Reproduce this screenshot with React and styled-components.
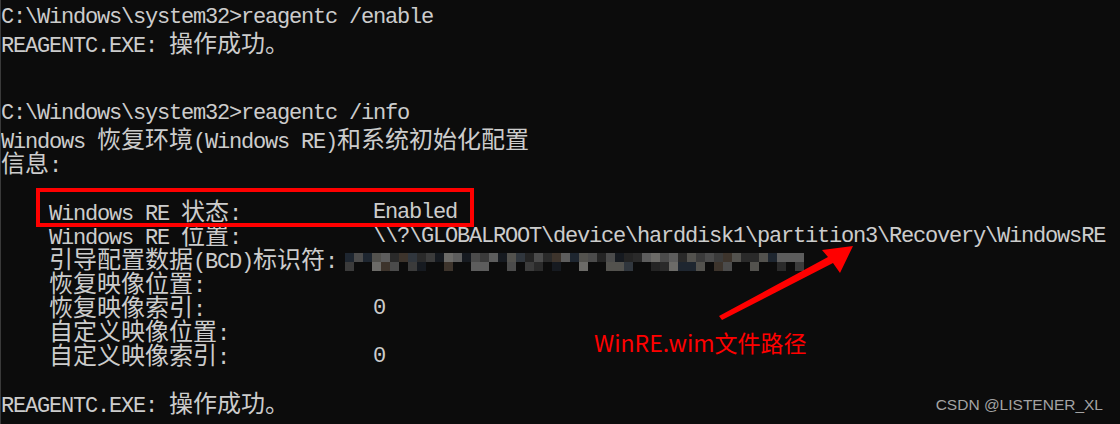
import React from "react";
import styled, { createGlobalStyle } from "styled-components";

const GlobalStyle = createGlobalStyle`
  html, body {
    margin: 0;
    padding: 0;
    background: #0c0c0c;
  }
`;

const Screen = styled.div`
  position: relative;
  width: 1120px;
  height: 424px;
  overflow: hidden;
  background: #0c0c0c;
  border-left: 1px solid #3a3a3a;
  box-sizing: border-box;
`;

const Console = styled.div`
  padding-top: 6px;
  color: #cccccc;
  font-family: "Liberation Mono", "DejaVu Sans Mono", monospace;
  font-size: 22px;
  letter-spacing: -1.2px;
`;

const Line = styled.div`
  height: 24px;
  line-height: 24px;
  white-space: pre;
`;

const Han = styled.span`
  display: inline-block;
  height: 24px;
  font-family: "Noto Sans CJK SC", sans-serif;
  font-size: 24px;
  letter-spacing: 0;
  line-height: 24px;
`;

const InfoRow = styled.div`
  display: grid;
  grid-template-columns: 324px auto;
  height: 24px;
  line-height: 24px;
  padding-left: 48px;
  white-space: pre;
`;

const Value = styled.div`
  display: flex;
  align-items: center;
  margin-left: ${(p) => (p.$shift ? "-28px" : "0")};
`;

const Highlight = styled.div`
  position: absolute;
  left: 35px;
  top: 188px;
  width: 438px;
  height: 39px;
  border: 4px solid #ff0000;
  box-sizing: border-box;
`;

const Overlay = styled.svg`
  position: absolute;
  left: 0;
  top: 0;
  pointer-events: none;
`;

const Caption = styled.div`
  position: absolute;
  left: 593px;
  top: 327px;
  color: #ff0000;
  font-family: "Noto Sans CJK SC", "Liberation Sans", sans-serif;
  font-size: 23px;
  line-height: 30px;
  white-space: nowrap;
`;

const Watermark = styled.div`
  position: absolute;
  right: 17px;
  bottom: 10px;
  color: #a3a3a3;
  font-family: "Liberation Sans", Arial, sans-serif;
  font-size: 15.5px;
  line-height: 18px;
  white-space: nowrap;
`;

const isWide = (ch) => ch.charCodeAt(0) >= 0x2e80;

// splits a console line into half-width runs and full-width (CJK) runs
const Term = ({ text }) => {
  const parts = [];
  let run = "";
  let wide = false;
  const flush = () => {
    if (!run) return;
    parts.push(wide ? <Han key={parts.length}>{run}</Han> : run);
    run = "";
  };
  for (const ch of text) {
    if (isWide(ch) !== wide) {
      flush();
      wide = isWide(ch);
    }
    run += ch;
  }
  flush();
  return <>{parts}</>;
};

const palette = [
  "#2a2a2a", "#3b3b3b", "#4b4b4b", "#5d5d5d", "#6c6b68",
  "#1e2630", "#30363d", "#3d342c", "#242424", "#53524e", "#161a20",
];

const Mosaic = () => {
  let seed = 7;
  const rand = () => {
    seed = (seed * 9301 + 49297) % 233280;
    return seed / 233280;
  };
  const cells = [];
  for (let i = 0; i < 51; i++) {
    const x = i * 9;
    cells.push({ x, y: 4, c: palette[Math.floor(rand() * palette.length)] });
    if (rand() > 0.45) {
      cells.push({ x, y: 13, c: palette[Math.floor(rand() * palette.length)] });
    }
  }
  return (
    <svg width="462" height="24" viewBox="0 0 462 24">
      {cells.map((b, i) => (
        <rect key={i} x={b.x} y={b.y} width="9" height="9" fill={b.c} />
      ))}
    </svg>
  );
};

const info = [
  ["Windows RE 状态:", "Enabled"],
  ["Windows RE 位置:", "\\\\?\\GLOBALROOT\\device\\harddisk1\\partition3\\Recovery\\WindowsRE"],
  ["引导配置数据(BCD)标识符:", null, true],
  ["恢复映像位置:", ""],
  ["恢复映像索引:", "0"],
  ["自定义映像位置:", ""],
  ["自定义映像索引:", "0"],
];

const lines = [
  "C:\\Windows\\system32>reagentc /enable",
  "REAGENTC.EXE: 操作成功。",
  "",
  "",
  "C:\\Windows\\system32>reagentc /info",
  "Windows 恢复环境(Windows RE)和系统初始化配置",
  "信息:",
  "",
];

export default function App() {
  return (
    <>
      <GlobalStyle />
      <Screen>
        <Console>
          {lines.map((l, i) => (
            <Line key={i}>
              <Term text={l} />
            </Line>
          ))}
          {info.map(([label, value, masked]) => (
            <InfoRow key={label}>
              <div>
                <Term text={label} />
              </div>
              <Value $shift={masked}>{masked ? <Mosaic /> : value}</Value>
            </InfoRow>
          ))}
          <Line />
          <Line>
            <Term text="REAGENTC.EXE: 操作成功。" />
          </Line>
        </Console>
        <Highlight />
        <Overlay width="1120" height="424" viewBox="0 0 1120 424">
          <polygon
            points="718,316 827,257 821,250 852,246 839,273 832,263 721,320"
            fill="#ff0000"
          />
        </Overlay>
        <Caption>WinRE.wim文件路径</Caption>
        <Watermark>CSDN @LISTENER_XL</Watermark>
      </Screen>
    </>
  );
}
